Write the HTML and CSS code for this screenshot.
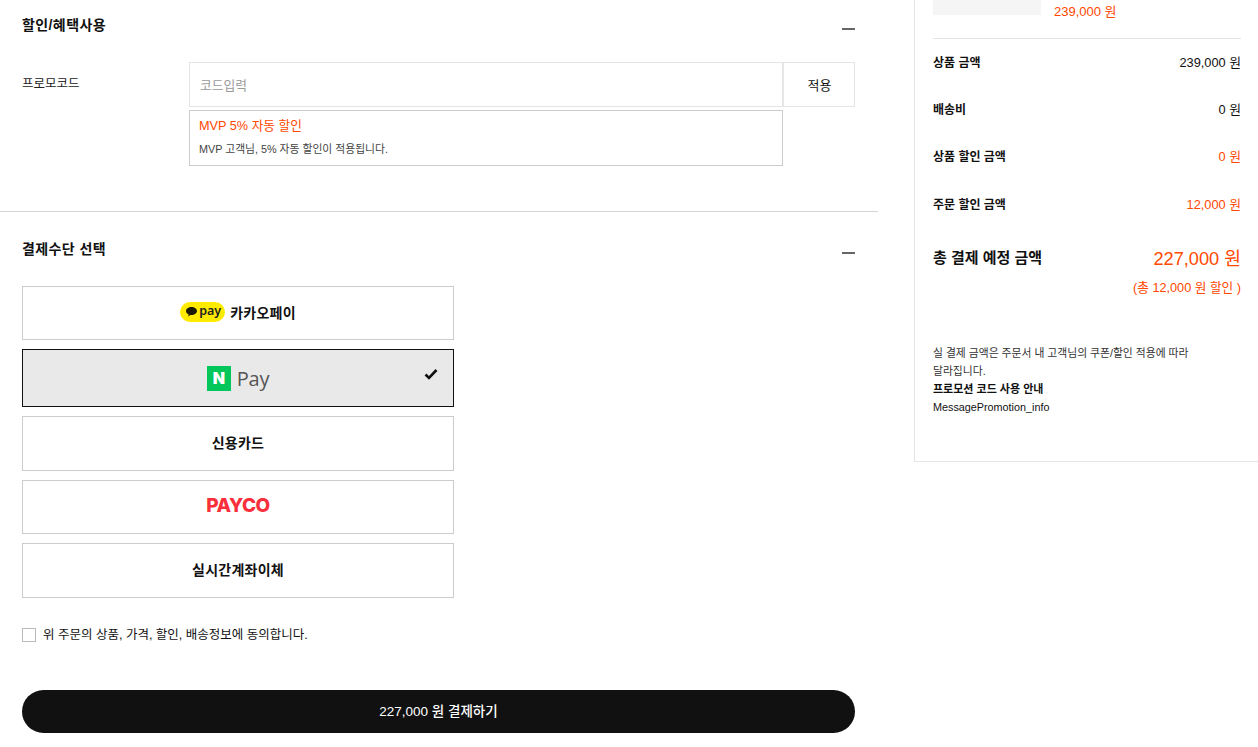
FILE: index.html
```html
<!DOCTYPE html>
<html lang="ko">
<head>
<meta charset="utf-8">
<title>결제</title>
<link rel="stylesheet" href="styles.css">
</head>
<body>
<div class="page">
  <main class="main">
    <section class="promo">
      <header class="sec-head">
        <h2 class="sec-title">할인/혜택사용</h2>
        <span class="minus"></span>
      </header>
      <div class="promo-row">
        <span class="promo-label">프로모코드</span>
        <div class="promo-body">
          <div class="code-line">
            <input class="code-input" type="text" placeholder="코드입력">
            <button class="code-apply" type="button">적용</button>
          </div>
          <div class="promo-box">
            <p class="promo-name">MVP 5% 자동 할인</p>
            <p class="promo-desc">MVP 고객님, 5% 자동 할인이 적용됩니다.</p>
          </div>
        </div>
      </div>
    </section>
    <section class="payment">
      <header class="sec-head">
        <h2 class="sec-title">결제수단 선택</h2>
        <span class="minus"></span>
      </header>
      <div class="methods">
        <div class="method h54 kakao-m">
          <span class="kakao-logo">
            <svg class="bubble" width="11" height="10" viewBox="0 0 11 10"><path d="M5.5 0C8.5 0 11 1.8 11 4s-2.5 4-5.5 4c-.4 0-.8 0-1.1-.1L2.2 9.6l.4-2.3C1 6.600 0 5.400 0 4 0 1.800 2.500 0 5.500 0z" fill="#1a1a00"/></svg>
            <span class="kakao-pay">pay</span>
          </span>
          <span class="method-text">카카오페이</span>
        </div>
        <div class="method h58 selected">
          <span class="npay-mark">N</span>
          <span class="npay-text">Pay</span>
          <svg class="check" width="14" height="12" viewBox="0 0 14 12"><path d="M1.500 6.500 5 10 12.500 2" fill="none" stroke="#111" stroke-width="2.600"/></svg>
        </div>
        <div class="method h55"><span class="method-text">신용카드</span></div>
        <div class="method h54"><span class="payco">PAYCO</span></div>
        <div class="method h55"><span class="method-text">실시간계좌이체</span></div>
      </div>
      <label class="agree">
        <span class="agree-box"></span>
        <span class="agree-text">위 주문의 상품, 가격, 할인, 배송정보에 동의합니다.</span>
      </label>
      <button class="pay-btn" type="button">227,000 원 결제하기</button>
    </section>
  </main>
  <aside class="aside">
    <div class="item">
      <div class="thumb"></div>
      <span class="item-price">239,000 원</span>
    </div>
    <dl class="rows">
      <div class="row"><dt>상품 금액</dt><dd>239,000 원</dd></div>
      <div class="row"><dt>배송비</dt><dd>0 원</dd></div>
      <div class="row"><dt>상품 할인 금액</dt><dd class="accent">0 원</dd></div>
      <div class="row"><dt>주문 할인 금액</dt><dd class="accent">12,000 원</dd></div>
    </dl>
    <div class="total">
      <span class="total-label">총 결제 예정 금액</span>
      <span class="total-value">227,000 원</span>
    </div>
    <p class="total-sub">(총 12,000 원 할인 )</p>
    <p class="note">실 결제 금액은 주문서 내 고객님의 쿠폰/할인 적용에 따라<br>달라집니다.</p>
    <p class="note-title">프로모션 코드 사용 안내</p>
    <p class="note-msg">MessagePromotion_info</p>
  </aside>
</div>
</body>
</html>
```

FILE: styles.css
```css
* { box-sizing: border-box; }
html, body { margin: 0; padding: 0; background: #fff; }
body {
  font-family: "Liberation Sans", "Noto Sans CJK KR", sans-serif;
  color: #111;
  overflow: hidden;
}
p, h2, dl, dd { margin: 0; }
.page { display: flex; align-items: flex-start; height: 747px; }
.main { width: 878px; flex: none; }
.aside {
  width: 344px;
  margin-left: 36px;
  height: 462px;
  border-left: 1px solid #e5e5e5;
  border-bottom: 1px solid #e5e5e5;
  padding-left: 18px;
  padding-right: 17px;
  flex: none;
}

/* section headers */
.sec-head {
  display: flex;
  justify-content: space-between;
  align-items: center;
  padding: 0 23px 0 22px;
}
.sec-title { font-size: 14px; line-height: 20px; font-weight: 700; color: #111; letter-spacing: .4px; }
.minus { width: 13px; height: 2px; background: #666; margin-top: 8px; }

/* promo */
.promo { height: 212px; padding-top: 15px; border-bottom: 1px solid #d5d5d5; }
.promo-row { display: flex; padding: 27px 23px 0 22px; }
.promo-label { width: 167px; flex: none; font-size: 12.500px; line-height: 18px; margin-top: 13px; color: #222; }
.promo-body { flex: 1; }
.code-line { display: flex; height: 45px; }
.code-input {
  width: 594px;
  height: 45px;
  border: 1px solid #e5e5e5;
  padding: 2px 10px 0;
  font: 12.800px "Liberation Sans", "Noto Sans CJK KR", sans-serif;
  background: #fff;
  outline: none;
}
.code-input::placeholder { color: #999; opacity: 1; }
.code-apply {
  width: 72px;
  height: 45px;
  border: 1px solid #e5e5e5;
  background: #fff;
  padding: 0 0 0 1px;
  font: 13px "Liberation Sans", "Noto Sans CJK KR", sans-serif;
  color: #111;
}
.promo-box {
  width: 594px;
  height: 56px;
  margin-top: 3px;
  border: 1px solid #ccc;
  padding: 6px 9px;
}
.promo-name { font-size: 12.700px; line-height: 18px; color: #ff4800; }
.promo-desc { font-size: 10.800px; line-height: 16px; margin-top: 6px; color: #444; }

/* payment */
.payment { padding-top: 27px; }
.methods { display: flex; flex-direction: column; gap: 9px; width: 432px; margin: 27px 0 0 22px; }
.method {
  position: relative;
  display: flex;
  align-items: center;
  justify-content: center;
  border: 1px solid #ccc;
  background: #fff;
}
.h54 { height: 54px; }
.h55 { height: 55px; }
.h58 { height: 58px; }
.method-text { font-size: 14px; font-weight: 700; color: #111; letter-spacing: .25px; margin-top: -3px; }
.selected { background: #e9e9e9; border-color: #111; }

.kakao-m { gap: 5px; }
.kakao-logo {
  display: flex;
  align-items: center;
  gap: 2px;
  width: 45px;
  height: 20px;
  padding-left: 6px;
  border-radius: 10px;
  background: #ffeb00;
  margin-top: -2px;
}
.kakao-pay { font-family: "Noto Sans", sans-serif; font-size: 12.500px; line-height: 20px; font-weight: 600; color: #222; margin-top: -2px; }
.bubble { flex: none; }

.npay-mark {
  width: 24px;
  height: 25px;
  background: #03c75a;
  color: #fff;
  font-family: "Inter", sans-serif;
  font-size: 16px;
  font-weight: 900;
  line-height: 25px;
  text-align: center;
}
.npay-text { font-family: "Open Sans", sans-serif; font-size: 20px; line-height: 25px; color: #555; margin-left: 6px; letter-spacing: -.3px; }
.check { position: absolute; right: 15px; top: 18px; }

.payco { font-family: "Inter", sans-serif; font-size: 19px; font-weight: 800; letter-spacing: -0.5px; color: #f9303c; margin-top: -3px; }

/* agreement */
.agree { display: flex; align-items: center; gap: 7px; margin: 30px 0 0 22px; height: 14px; }
.agree-box { width: 14px; height: 14px; border: 1px solid #bbb; background: #fff; }
.agree-text { font-size: 12.500px; line-height: 14px; color: #111; }

.pay-btn {
  display: block;
  width: 833px;
  height: 43px;
  margin: 48px 0 0 22px;
  padding: 0 0 3px;
  border: 0;
  border-radius: 22px;
  background: #111;
  color: #fff;
  font: 500 13.500px "Liberation Sans", "Noto Sans CJK KR", sans-serif;
}

/* aside */
.item { display: flex; gap: 13px; height: 39px; border-bottom: 1px solid #e5e5e5; }
.thumb { width: 108px; height: 15px; background: #f5f5f5; }
.item-price { font-size: 13px; line-height: 24px; color: #ff4800; }
.rows { display: flex; flex-direction: column; padding-top: 8px; }
.row { display: flex; justify-content: space-between; align-items: center; height: 47.200px; padding-bottom: 18px; }
.row dt { font-size: 12px; font-weight: 700; color: #111; }
.row dd { font-size: 12.800px; color: #111; }
.row dd.accent { color: #ff4800; }
.total { display: flex; justify-content: space-between; align-items: center; margin-top: 6.200px; height: 30px; }
.total-label { font-size: 15px; font-weight: 700; color: #111; }
.total-value { font-size: 18.200px; color: #ff4800; }
.total-sub { font-size: 12.700px; line-height: 18px; text-align: right; color: #ff4800; margin-top: 7px; }
.note { font-size: 10.800px; line-height: 18px; margin-top: 47px; color: #333; }
.note-title { font-size: 11px; line-height: 18px; font-weight: 700; color: #111; }
.note-msg { font-size: 10.800px; line-height: 18px; color: #111; }
```
